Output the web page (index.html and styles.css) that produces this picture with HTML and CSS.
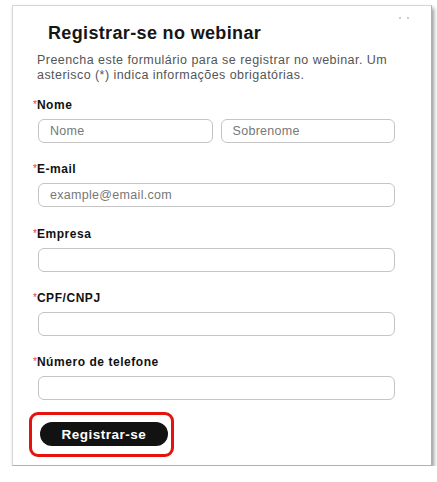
FILE: index.html
```
<!DOCTYPE html>
<html lang="pt">
<head>
<meta charset="utf-8">
<title>Registrar-se no webinar</title>
<link rel="stylesheet" href="styles.css">
</head>
<body>
<div class="card">
  <span class="close"><i></i><i></i></span>
  <h1 class="title">Registrar-se no webinar</h1>
  <p class="desc">Preencha este formulário para se registrar no webinar. Um asterisco (*) indica informações obrigatórias.</p>
  <div class="fields">
    <div class="field">
      <div class="label"><span class="req">*</span>Nome</div>
      <div class="row">
        <div class="input">Nome</div>
        <div class="input">Sobrenome</div>
      </div>
    </div>
    <div class="field">
      <div class="label"><span class="req">*</span>E-mail</div>
      <div class="input">example@email.com</div>
    </div>
    <div class="field">
      <div class="label"><span class="req">*</span>Empresa</div>
      <div class="input"></div>
    </div>
    <div class="field">
      <div class="label"><span class="req">*</span>CPF/CNPJ</div>
      <div class="input"></div>
    </div>
    <div class="field">
      <div class="label"><span class="req">*</span>Número de telefone</div>
      <div class="input"></div>
    </div>
  </div>
  <div class="highlight"><button class="btn">Registrar-se</button></div>
</div>
</body>
</html>
```
FILE: styles.css
```
html, body {
  margin: 0;
  padding: 0;
  background: #ffffff;
}
body {
  font-family: "Liberation Sans", Arial, sans-serif;
  color: #111;
}
.card {
  position: relative;
  box-sizing: border-box;
  margin: 5px 0 0 12px;
  width: 420px;
  height: 461px;
  padding: 16px 0 0 20px;
  background: #fff;
  border: 1px solid #d6d6d6;
  border-right-color: #b0b0b0;
  border-bottom-color: #b0b0b0;
  box-shadow: 2px 3px 4px rgba(0, 0, 0, 0.4);
}
.close {
  position: absolute;
  top: 11px;
  right: 22px;
  display: flex;
  gap: 6px;
}
.close i {
  display: block;
  width: 2px;
  height: 2px;
  border-radius: 50%;
  background: #bbb;
}
.title {
  margin: 0 0 0 15px;
  font-size: 18px;
  line-height: 22px;
  font-weight: 700;
  letter-spacing: 0.35px;
  color: #161616;
}
.desc {
  margin: 9px 0 0 4px;
  width: 370px;
  font-size: 12.5px;
  line-height: 15px;
  letter-spacing: 0.45px;
  color: #555;
}
.fields {
  display: flex;
  flex-direction: column;
  gap: 19.25px;
  margin-top: 15px;
}
.field {
  display: flex;
  flex-direction: column;
  gap: 7px;
}
.label {
  font-size: 12px;
  line-height: 14px;
  font-weight: 700;
  letter-spacing: 0.55px;
  color: #111;
}
.req {
  color: #e23b3b;
  font-size: 10px;
  font-weight: 400;
  margin-right: 0;
  letter-spacing: 0;
  vertical-align: 1px;
}
.row {
  display: flex;
  gap: 8px;
  width: 357px;
  margin-left: 5px;
}
.row .input {
  margin-left: 0;
  flex: 1;
  width: auto;
}
.input {
  box-sizing: border-box;
  margin-left: 5px;
  width: 357px;
  height: 24px;
  border: 1px solid #c4c4c4;
  border-radius: 6px;
  padding: 0 11px;
  font-size: 12.5px;
  line-height: 22px;
  letter-spacing: 0.3px;
  color: #777;
  background: #fff;
}
.highlight {
  display: inline-block;
  box-sizing: border-box;
  margin: 12px 0 0 -4px;
  padding: 7px 3px 8px 8px;
  border: 3px solid #e5120e;
  border-radius: 9px;
}
.btn {
  display: block;
  width: 128px;
  height: 24px;
  border: none;
  border-radius: 12px;
  background: #121212;
  color: #fff;
  font-family: "Liberation Sans", Arial, sans-serif;
  font-size: 13.5px;
  font-weight: 700;
  letter-spacing: 0.5px;
  padding: 0;
}
```
